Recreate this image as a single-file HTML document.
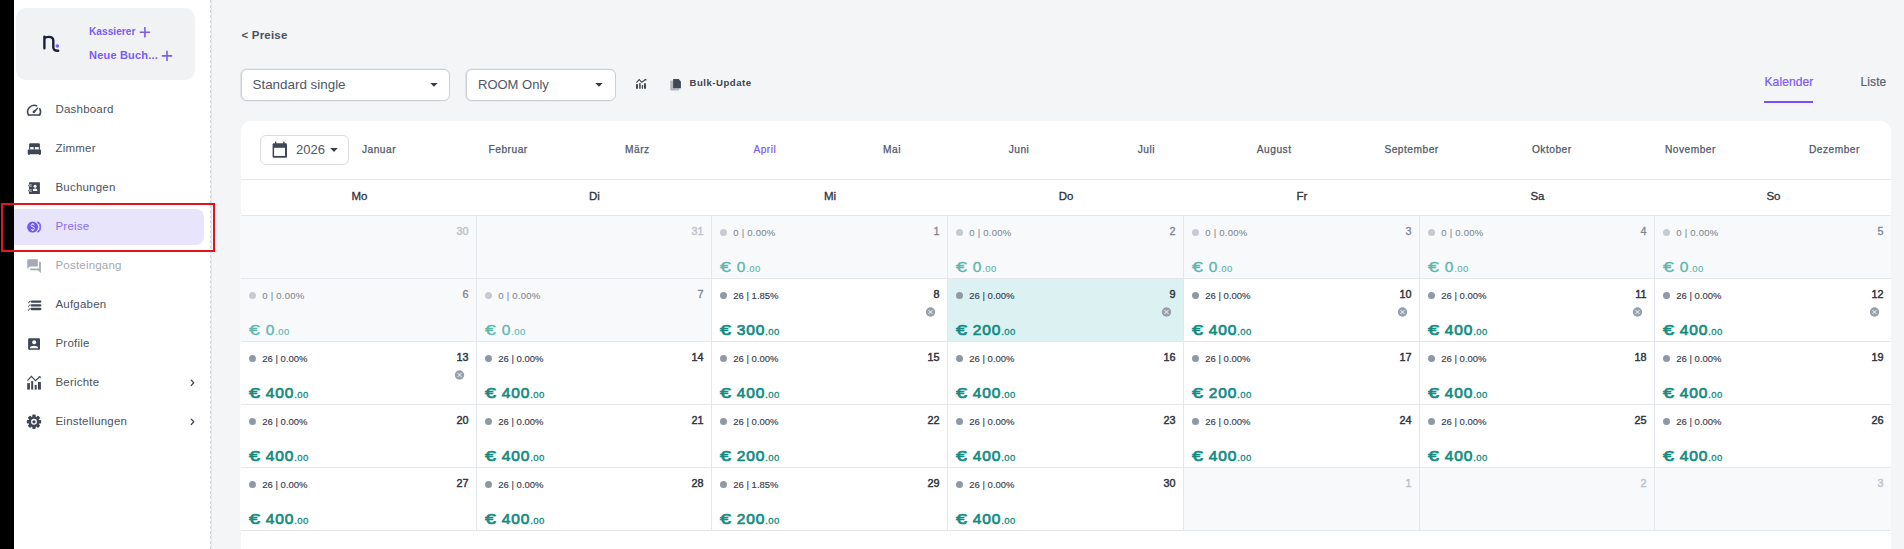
<!DOCTYPE html>
<html><head><meta charset="utf-8"><title>Preise</title><style>
*{box-sizing:border-box;margin:0;padding:0}
html,body{width:1904px;height:549px;overflow:hidden}
body{position:relative;background:#f4f5f7;font-family:"Liberation Sans",sans-serif;color:#4b5262}
.abs{position:absolute}
#blk{position:absolute;left:0;top:0;width:14px;height:549px;background:#000}
#side{position:absolute;left:14px;top:0;width:197px;height:549px;background:#fff;border-right:1px dashed #d3d7dc}
#brand{position:absolute;left:16px;top:8px;width:179px;height:72px;background:#f1f2f4;border-radius:10px}
.qa{position:absolute;left:89px;font-size:11px;font-weight:bold;color:#7c5cf5;white-space:nowrap;line-height:1}
.plus{position:absolute;width:10.6px;height:10.6px}
.plus:before{content:"";position:absolute;left:0;top:4.6px;width:10.6px;height:1.4px;background:#7c5cf5}
.plus:after{content:"";position:absolute;top:0;left:4.6px;height:10.6px;width:1.4px;background:#7c5cf5}
.nav{position:absolute;left:55.5px;font-size:11.5px;letter-spacing:0.2px;color:#4b5262;white-space:nowrap;line-height:1}
.nav.dis{color:#a4a9b1}
.nav.act{color:#8a6ef3}
.ic{position:absolute;left:26px;width:16px;height:16px}
#hl{position:absolute;left:14px;top:209px;width:190px;height:36px;background:#e8e4fb;border-radius:0 8px 8px 0}
#red{position:absolute;left:1px;top:203px;width:214px;height:49px;border:2px solid #e3141b}
.chev{position:absolute;left:189px;width:6px;height:6px;border-right:1.3px solid #4b5262;border-bottom:1.3px solid #4b5262;transform:rotate(-45deg)}
#back{position:absolute;left:241.5px;top:30px;font-size:11.5px;letter-spacing:0.2px;font-weight:bold;color:#4a5161;line-height:1}
.sel{position:absolute;top:69px;height:32px;background:#fff;border:1px solid #cdd1d7;border-radius:6px;box-shadow:-0.6px 0 0 0.4px #dfe2e6}
.sel .t{position:absolute;left:10.5px;top:8.2px;font-size:13.4px;color:#505766;line-height:1;white-space:nowrap}
.caret{position:absolute;width:0;height:0;border-left:3.8px solid transparent;border-right:3.8px solid transparent;border-top:4px solid #3f4653}
#bulk{position:absolute;left:689.5px;top:78.3px;font-size:9.6px;letter-spacing:0.5px;font-weight:bold;color:#3f4653;line-height:1;white-space:nowrap}
.tab{position:absolute;top:75.8px;font-size:12px;letter-spacing:0.1px;-webkit-text-stroke:0.2px currentColor;line-height:1;white-space:nowrap}
#card{position:absolute;left:241px;top:121px;width:1650px;height:440px;background:#fff;border-radius:10px}
#year{position:absolute;left:260px;top:135px;width:89px;height:30px;border:1px solid #d9dde3;border-radius:6px;background:#fff}
.mon{position:absolute;top:145px;width:120px;text-align:center;font-size:10.2px;letter-spacing:0.5px;text-indent:0.5px;color:#515867;-webkit-text-stroke:0.25px #515867;line-height:1;white-space:nowrap}
.mon.act{color:#7e57f5;-webkit-text-stroke:0.2px #7e57f5}
.dh{position:absolute;top:190.6px;width:80px;text-align:center;font-size:11.5px;font-weight:normal;color:#2c323d;line-height:1;-webkit-text-stroke:0.3px #2c323d}
.hl{position:absolute;left:241px;width:1650px;height:1px;background:#e4e7eb}
.vl{position:absolute;top:215px;width:1px;height:315px;background:#e4e7eb}
.cell{position:absolute}
.dn{position:absolute;right:7.6px;top:11.3px;font-size:10.8px;font-weight:normal;color:#2f3541;line-height:1;-webkit-text-stroke:0.45px currentColor}
.dnp{color:#bfc3c9}
.dnl{color:#7d8490;-webkit-text-stroke:0.3px currentColor}
.dot{position:absolute;left:9px;top:14.1px;width:7px;height:7px;border-radius:50%;background:#8f99a5}
.dot.l{background:#c6cbd2}
.st{position:absolute;left:22.3px;top:12.7px;font-size:9.5px;letter-spacing:0;color:#3a4050;line-height:1;white-space:nowrap;-webkit-text-stroke:0.15px #3a4050}
.st.l{color:#868c95;-webkit-text-stroke:0.12px #868c95;letter-spacing:0.25px}
.pr{position:absolute;left:9.2px;top:43.8px;font-size:15.5px;letter-spacing:0.85px;font-weight:normal;-webkit-text-stroke:0.7px #138c82;color:#138c82;line-height:1;white-space:nowrap}
.pr b{font-weight:normal;display:inline-block;width:16.6px;letter-spacing:0;transform:scaleX(1.28);transform-origin:0 0}
.pr.l{color:#5db7ad;font-weight:normal;-webkit-text-stroke:0.35px #5db7ad}
.pr.l b{font-weight:normal}
.pr.l span{-webkit-text-stroke:0.15px #5db7ad}
.pr span{font-size:9.5px;font-weight:normal;letter-spacing:0.45px;-webkit-text-stroke:0.3px #138c82}
.xi{position:absolute;right:11px;top:29px;width:11px;height:11px}
.xi svg{display:block}

</style></head><body>
<div id="blk"></div>
<div id="side"></div><div class="abs" style="left:211px;top:0;width:1px;height:549px;background:#e6e8eb"></div>
<div id="brand"></div>
<svg class="abs" style="left:0;top:0" width="80" height="80" viewBox="0 0 80 80"><path d="M44.4 48.3V36.6M44.4 38.2C45.6 37.1 47.1 36.9 48.8 36.9C51.5 36.9 53.3 38.3 53.3 40.8V47.3C53.3 49.8 55 51 58.2 50.7" fill="none" stroke="#1b1f3b" stroke-width="2.4" stroke-linecap="round"/><circle cx="57.3" cy="46" r="1.8" fill="#7b5cfa"/></svg>
<div class="qa" style="top:27.3px;font-size:10.2px">Kassierer</div><svg class="abs" style="left:130px;top:20px" width="50" height="50" viewBox="130 20 50 50"><path d="M139.7 32.2H150.1M144.9 27V37.4" stroke="#7c5cf5" stroke-width="1.6"/><path d="M161.8 55.9H172.2M167 50.7V61.1" stroke="#7c5cf5" stroke-width="1.6"/></svg>
<div class="qa" style="top:50px;letter-spacing:0.2px">Neue Buch...</div>

<div id="hl"></div>
<div class="nav" style="top:104px">Dashboard</div>
<div class="nav" style="top:143px">Zimmer</div>
<div class="nav" style="top:182px">Buchungen</div>
<div class="nav act" style="top:221px">Preise</div>
<div class="nav dis" style="top:260px">Posteingang</div>
<div class="nav" style="top:299px">Aufgaben</div>
<div class="nav" style="top:338px">Profile</div>
<div class="nav" style="top:377px">Berichte</div>
<div class="nav" style="top:416px">Einstellungen</div>
<svg class="abs" style="left:180px;top:372px" width="24" height="24" viewBox="0 0 24 24"><path d="M11.3 8.1L13.7 10.8L11.2 13.6" fill="none" stroke="#3f4756" stroke-width="1.3" stroke-linecap="round" stroke-linejoin="round"/></svg>
<svg class="abs" style="left:180px;top:411px" width="24" height="24" viewBox="0 0 24 24"><path d="M11.3 8.1L13.7 10.8L11.2 13.6" fill="none" stroke="#3f4756" stroke-width="1.3" stroke-linecap="round" stroke-linejoin="round"/></svg>
<svg class="abs" style="left:22px;top:100px" width="24" height="24" viewBox="0 0 24 24" fill="none" stroke="#3f4756" stroke-width="1.6" stroke-linecap="round"><path d="M6.4 15A6.6 6.6 0 0 1 14.6 5.8"/><path d="M17.9 8.8A6.6 6.6 0 0 1 17.6 15"/><path d="M6.6 15H17.5"/><path d="M12.65 12.85L10.95 11.15L15.92 7.32L16.48 7.88Z" fill="#3f4756" stroke="none"/><circle cx="11.8" cy="12" r="1.2" fill="#3f4756" stroke="none"/></svg>
<svg class="abs" style="left:22px;top:139px" width="24" height="24" viewBox="0 0 24 24"><path fill="#3f4756" d="M8.4 4.2H16.6A1.3 1.3 0 0 1 17.9 5.5V10.7H7.1V5.5A1.3 1.3 0 0 1 8.4 4.2Z"/><rect x="8.2" y="8.1" width="3.5" height="2.6" fill="#fff"/><rect x="12.9" y="8.1" width="3.9" height="2.6" fill="#fff"/><rect x="5.7" y="10.6" width="13.3" height="4.6" rx="0.8" fill="#3f4756"/><rect x="6.2" y="14.6" width="1.6" height="1.2" fill="#3f4756"/><rect x="17" y="14.6" width="1.6" height="1.2" fill="#3f4756"/></svg>
<svg class="abs" style="left:22px;top:178px" width="24" height="24" viewBox="0 0 24 24"><rect x="7" y="4.2" width="10.9" height="11.8" rx="0.6" fill="#3f4756"/><rect x="6.8" y="6.3" width="2.6" height="2.6" fill="#fff"/><rect x="6.8" y="11.3" width="2.6" height="2.6" fill="#fff"/><rect x="6.5" y="6.9" width="2.3" height="1.4" rx="0.7" fill="none" stroke="#3f4756" stroke-width="0.9"/><rect x="6.5" y="11.9" width="2.3" height="1.4" rx="0.7" fill="none" stroke="#3f4756" stroke-width="0.9"/><circle cx="13.1" cy="8.2" r="1.5" fill="#fff"/><path d="M11 13.1V12A1.6 1.6 0 0 1 12.6 10.4H13.7A1.6 1.6 0 0 1 15.3 12V13.1Z" fill="#fff"/></svg>
<svg class="abs" style="left:22px;top:217px" width="24" height="24" viewBox="0 0 24 24"><path d="M15.4 5A5.8 5.8 0 0 1 15.4 15.2" fill="none" stroke="#7159f0" stroke-width="1.5"/><path d="M17.1 6.6A5.6 5.6 0 0 1 17.1 13.6" fill="none" stroke="#8f7cf3" stroke-width="1"/><circle cx="10.6" cy="10.1" r="5.9" fill="#7159f0" stroke="#e8e4fb" stroke-width="0.8"/><path d="M12.4 8C12 7.4 11.4 7.2 10.7 7.2C9.8 7.2 9.1 7.7 9.1 8.5C9.1 10.2 12.4 9.5 12.4 11.5C12.4 12.4 11.6 13 10.7 13C9.9 13 9.2 12.7 8.9 12.1M10.7 6.3V7.2M10.7 13V14" fill="none" stroke="#fff" stroke-width="1"/></svg>
<svg class="abs" style="left:22px;top:256px" width="24" height="24" viewBox="0 0 24 24" fill="#a6abb3"><path d="M18.8 6.1H17.1V12.6H8.3V14.2H16L18.9 17V6.1Z"/><path d="M15.8 3.3H5.9A0.6 0.6 0 0 0 5.3 3.9V13.1L7.9 10.6H15.2A0.6 0.6 0 0 0 15.8 10V3.3Z"/></svg>
<svg class="abs" style="left:22px;top:295px" width="24" height="24" viewBox="0 0 24 24"><path d="M9.6 6.6H18.3M9.6 10.3H18.3M9.6 14H18.3" stroke="#3f4756" stroke-width="2.3" stroke-linecap="round"/><path d="M5.9 7.4L6.6 8L7.9 5.9M5.9 11.1L6.6 11.7L7.9 9.6M5.9 14.8L6.6 15.4L7.9 13.3" fill="none" stroke="#3f4756" stroke-width="0.9"/></svg>
<svg class="abs" style="left:22px;top:334px" width="24" height="24" viewBox="0 0 24 24"><rect x="6.1" y="4.2" width="11.9" height="11.6" rx="1.1" fill="#3f4756"/><circle cx="12.2" cy="8.3" r="2" fill="#fff"/><path d="M8 14.3V13.5C8 12.4 10.3 11.7 12 11.7C13.7 11.7 16 12.4 16 13.5V14.3Z" fill="#fff"/></svg>
<svg class="abs" style="left:22px;top:373px" width="24" height="24" viewBox="0 0 24 24"><rect x="5.2" y="10.1" width="2.7" height="6.5" fill="#3f4756"/><rect x="9.2" y="8.1" width="2" height="8.5" fill="#3f4756"/><rect x="12.7" y="11.9" width="2" height="4.7" fill="#3f4756"/><rect x="16" y="9" width="2.9" height="7.6" fill="#3f4756"/><path d="M5.4 7.6L9.4 3.4L13.5 7.7L17.6 4" fill="none" stroke="#3f4756" stroke-width="1.2"/><path d="M16.2 3.2H18.7V5.7Z" fill="#3f4756"/></svg>
<svg class="abs" style="left:22px;top:412px" width="24" height="24" viewBox="0 0 24 24"><g fill="#3f4756" transform="translate(12 9.8)"><rect x="-1.7" y="-7.2" width="3.4" height="14.4" rx="0.8"/><rect x="-1.7" y="-7.2" width="3.4" height="14.4" rx="0.8" transform="rotate(45)"/><rect x="-1.7" y="-7.2" width="3.4" height="14.4" rx="0.8" transform="rotate(90)"/><rect x="-1.7" y="-7.2" width="3.4" height="14.4" rx="0.8" transform="rotate(135)"/><circle r="5.3"/></g><circle cx="12" cy="9.8" r="2.3" fill="none" stroke="#fff" stroke-width="1.3"/></svg>

<div id="red"></div>

<div id="back">&lt; Preise</div>
<div class="sel" style="left:241px;width:209px"><div class="t">Standard single</div></div>
<div class="sel" style="left:466px;width:150px"><div class="t" style="font-size:13px;top:8.4px;left:11px">ROOM Only</div></div>
<svg class="abs" style="left:0;top:0" width="700" height="200" viewBox="0 0 700 200"><path d="M430.3 82.9H437.6L434 86.7Z" fill="#333a48"/><path d="M595.3 82.9H602.6L599 86.7Z" fill="#333a48"/><g fill="#3f4855"><rect x="636" y="84" width="2" height="4.8" rx="0.6"/><rect x="639" y="83" width="1.8" height="5.8" rx="0.6" fill="#5a626e"/><rect x="641.8" y="85" width="1.3" height="3.8" rx="0.5"/><rect x="644" y="83.2" width="2" height="5.6" rx="0.6"/></g>
<path d="M636.4 82.6L639.2 79.6L641.8 82.3L645.8 79.3" fill="none" stroke="#3f4855" stroke-width="1.1"/><path d="M644.2 78.9H646.4V81.1Z" fill="#3f4855"/>
<path d="M670.2 81.5A1 1 0 0 1 671.2 80.5H673V88.2H679.3V89.5A1 1 0 0 1 678.3 90.5H671.2A1 1 0 0 1 670.2 89.5Z" fill="#b3b8bf"/>
<path d="M673.1 79H678.6L680.9 81.4V88.2H673.1Z" fill="#3f4855"/></svg>
<div id="bulk">Bulk-Update</div>
<div class="tab" style="left:1764.5px;color:#7e57f5">Kalender</div>
<div class="abs" style="left:1764px;top:101px;width:49px;height:2px;background:#7b4dff"></div>
<div class="tab" style="left:1860.5px;color:#566070">Liste</div>

<div id="card"></div>
<div id="year"></div>
<svg class="abs" style="left:268px;top:138px" width="24" height="24" viewBox="0 0 24 24"><rect x="4.6" y="5.2" width="14.4" height="14.5" rx="1.3" fill="#3f4855"/><rect x="6.1" y="9.8" width="10.9" height="8.1" fill="#fff"/><rect x="7" y="3.4" width="1.4" height="2.6" rx="0.6" fill="#3f4855"/><rect x="15.2" y="3.4" width="1.4" height="2.6" rx="0.6" fill="#3f4855"/></svg><svg class="abs" style="left:320px;top:140px" width="24" height="20" viewBox="320 140 24 20"><path d="M330.2 148H337.8L334 151.9Z" fill="#3a414e"/></svg>
<div class="abs" style="left:296px;top:143.3px;font-size:13px;color:#505766;line-height:1">2026</div>

<div class="mon" style="left:318.75px">Januar</div>
<div class="mon" style="left:447.9px">Februar</div>
<div class="mon" style="left:577.1px">März</div>
<div class="mon act" style="left:704.6px">April</div>
<div class="mon" style="left:831.75px">Mai</div>
<div class="mon" style="left:958.8px">Juni</div>
<div class="mon" style="left:1086.1px">Juli</div>
<div class="mon" style="left:1213.9px">August</div>
<div class="mon" style="left:1351.3px">September</div>
<div class="mon" style="left:1491.5px">Oktober</div>
<div class="mon" style="left:1630.2px">November</div>
<div class="mon" style="left:1774.2px">Dezember</div>
<div class="dh" style="left:319.5px">Mo</div>
<div class="dh" style="left:554.5px">Di</div>
<div class="dh" style="left:790px">Mi</div>
<div class="dh" style="left:1026px">Do</div>
<div class="dh" style="left:1262px">Fr</div>
<div class="dh" style="left:1497.5px">Sa</div>
<div class="dh" style="left:1733.5px">So</div>
<div class="cell" style="left:240px;top:215px;width:236px;height:63px;background:#f8f9fb"><div class="dn dnp">30</div></div>
<div class="cell" style="left:476px;top:215px;width:235px;height:63px;background:#f8f9fb"><div class="dn dnp">31</div></div>
<div class="cell" style="left:711px;top:215px;width:236px;height:63px;background:#f8f9fb"><div class="dn dnl">1</div><div class="dot l"></div><div class="st l">0 | 0.00%</div><div class="pr l"><b>€</b>0<span>.00</span></div></div>
<div class="cell" style="left:947px;top:215px;width:236px;height:63px;background:#f8f9fb"><div class="dn dnl">2</div><div class="dot l"></div><div class="st l">0 | 0.00%</div><div class="pr l"><b>€</b>0<span>.00</span></div></div>
<div class="cell" style="left:1183px;top:215px;width:236px;height:63px;background:#f8f9fb"><div class="dn dnl">3</div><div class="dot l"></div><div class="st l">0 | 0.00%</div><div class="pr l"><b>€</b>0<span>.00</span></div></div>
<div class="cell" style="left:1419px;top:215px;width:235px;height:63px;background:#f8f9fb"><div class="dn dnl">4</div><div class="dot l"></div><div class="st l">0 | 0.00%</div><div class="pr l"><b>€</b>0<span>.00</span></div></div>
<div class="cell" style="left:1654px;top:215px;width:237px;height:63px;background:#f8f9fb"><div class="dn dnl">5</div><div class="dot l"></div><div class="st l">0 | 0.00%</div><div class="pr l"><b>€</b>0<span>.00</span></div></div>
<div class="cell" style="left:240px;top:278px;width:236px;height:63px;background:#f8f9fb"><div class="dn dnl">6</div><div class="dot l"></div><div class="st l">0 | 0.00%</div><div class="pr l"><b>€</b>0<span>.00</span></div></div>
<div class="cell" style="left:476px;top:278px;width:235px;height:63px;background:#f8f9fb"><div class="dn dnl">7</div><div class="dot l"></div><div class="st l">0 | 0.00%</div><div class="pr l"><b>€</b>0<span>.00</span></div></div>
<div class="cell" style="left:711px;top:278px;width:236px;height:63px;background:#ffffff"><div class="dn ">8</div><div class="dot "></div><div class="st ">26 | 1.85%</div><div class="pr "><b>€</b>300<span>.00</span></div><div class="xi"><svg width="11" height="11" viewBox="0 0 11 11"><circle cx="5.5" cy="5" r="4.7" fill="#97a1ad"/><path d="M3.8 3.3L7.2 6.7M7.2 3.3L3.8 6.7" stroke="#fff" stroke-width="0.95" stroke-linecap="round"/></svg></div></div>
<div class="cell" style="left:947px;top:278px;width:236px;height:63px;background:#dcf1f2"><div class="dn ">9</div><div class="dot "></div><div class="st ">26 | 0.00%</div><div class="pr "><b>€</b>200<span>.00</span></div><div class="xi"><svg width="11" height="11" viewBox="0 0 11 11"><circle cx="5.5" cy="5" r="4.7" fill="#97a1ad"/><path d="M3.8 3.3L7.2 6.7M7.2 3.3L3.8 6.7" stroke="#fff" stroke-width="0.95" stroke-linecap="round"/></svg></div></div>
<div class="cell" style="left:1183px;top:278px;width:236px;height:63px;background:#ffffff"><div class="dn ">10</div><div class="dot "></div><div class="st ">26 | 0.00%</div><div class="pr "><b>€</b>400<span>.00</span></div><div class="xi"><svg width="11" height="11" viewBox="0 0 11 11"><circle cx="5.5" cy="5" r="4.7" fill="#97a1ad"/><path d="M3.8 3.3L7.2 6.7M7.2 3.3L3.8 6.7" stroke="#fff" stroke-width="0.95" stroke-linecap="round"/></svg></div></div>
<div class="cell" style="left:1419px;top:278px;width:235px;height:63px;background:#ffffff"><div class="dn ">11</div><div class="dot "></div><div class="st ">26 | 0.00%</div><div class="pr "><b>€</b>400<span>.00</span></div><div class="xi"><svg width="11" height="11" viewBox="0 0 11 11"><circle cx="5.5" cy="5" r="4.7" fill="#97a1ad"/><path d="M3.8 3.3L7.2 6.7M7.2 3.3L3.8 6.7" stroke="#fff" stroke-width="0.95" stroke-linecap="round"/></svg></div></div>
<div class="cell" style="left:1654px;top:278px;width:237px;height:63px;background:#ffffff"><div class="dn ">12</div><div class="dot "></div><div class="st ">26 | 0.00%</div><div class="pr "><b>€</b>400<span>.00</span></div><div class="xi"><svg width="11" height="11" viewBox="0 0 11 11"><circle cx="5.5" cy="5" r="4.7" fill="#97a1ad"/><path d="M3.8 3.3L7.2 6.7M7.2 3.3L3.8 6.7" stroke="#fff" stroke-width="0.95" stroke-linecap="round"/></svg></div></div>
<div class="cell" style="left:240px;top:341px;width:236px;height:63px;background:#ffffff"><div class="dn ">13</div><div class="dot "></div><div class="st ">26 | 0.00%</div><div class="pr "><b>€</b>400<span>.00</span></div><div class="xi"><svg width="11" height="11" viewBox="0 0 11 11"><circle cx="5.5" cy="5" r="4.7" fill="#97a1ad"/><path d="M3.8 3.3L7.2 6.7M7.2 3.3L3.8 6.7" stroke="#fff" stroke-width="0.95" stroke-linecap="round"/></svg></div></div>
<div class="cell" style="left:476px;top:341px;width:235px;height:63px;background:#ffffff"><div class="dn ">14</div><div class="dot "></div><div class="st ">26 | 0.00%</div><div class="pr "><b>€</b>400<span>.00</span></div></div>
<div class="cell" style="left:711px;top:341px;width:236px;height:63px;background:#ffffff"><div class="dn ">15</div><div class="dot "></div><div class="st ">26 | 0.00%</div><div class="pr "><b>€</b>400<span>.00</span></div></div>
<div class="cell" style="left:947px;top:341px;width:236px;height:63px;background:#ffffff"><div class="dn ">16</div><div class="dot "></div><div class="st ">26 | 0.00%</div><div class="pr "><b>€</b>400<span>.00</span></div></div>
<div class="cell" style="left:1183px;top:341px;width:236px;height:63px;background:#ffffff"><div class="dn ">17</div><div class="dot "></div><div class="st ">26 | 0.00%</div><div class="pr "><b>€</b>200<span>.00</span></div></div>
<div class="cell" style="left:1419px;top:341px;width:235px;height:63px;background:#ffffff"><div class="dn ">18</div><div class="dot "></div><div class="st ">26 | 0.00%</div><div class="pr "><b>€</b>400<span>.00</span></div></div>
<div class="cell" style="left:1654px;top:341px;width:237px;height:63px;background:#ffffff"><div class="dn ">19</div><div class="dot "></div><div class="st ">26 | 0.00%</div><div class="pr "><b>€</b>400<span>.00</span></div></div>
<div class="cell" style="left:240px;top:404px;width:236px;height:63px;background:#ffffff"><div class="dn ">20</div><div class="dot "></div><div class="st ">26 | 0.00%</div><div class="pr "><b>€</b>400<span>.00</span></div></div>
<div class="cell" style="left:476px;top:404px;width:235px;height:63px;background:#ffffff"><div class="dn ">21</div><div class="dot "></div><div class="st ">26 | 0.00%</div><div class="pr "><b>€</b>400<span>.00</span></div></div>
<div class="cell" style="left:711px;top:404px;width:236px;height:63px;background:#ffffff"><div class="dn ">22</div><div class="dot "></div><div class="st ">26 | 0.00%</div><div class="pr "><b>€</b>200<span>.00</span></div></div>
<div class="cell" style="left:947px;top:404px;width:236px;height:63px;background:#ffffff"><div class="dn ">23</div><div class="dot "></div><div class="st ">26 | 0.00%</div><div class="pr "><b>€</b>400<span>.00</span></div></div>
<div class="cell" style="left:1183px;top:404px;width:236px;height:63px;background:#ffffff"><div class="dn ">24</div><div class="dot "></div><div class="st ">26 | 0.00%</div><div class="pr "><b>€</b>400<span>.00</span></div></div>
<div class="cell" style="left:1419px;top:404px;width:235px;height:63px;background:#ffffff"><div class="dn ">25</div><div class="dot "></div><div class="st ">26 | 0.00%</div><div class="pr "><b>€</b>400<span>.00</span></div></div>
<div class="cell" style="left:1654px;top:404px;width:237px;height:63px;background:#ffffff"><div class="dn ">26</div><div class="dot "></div><div class="st ">26 | 0.00%</div><div class="pr "><b>€</b>400<span>.00</span></div></div>
<div class="cell" style="left:240px;top:467px;width:236px;height:63px;background:#ffffff"><div class="dn ">27</div><div class="dot "></div><div class="st ">26 | 0.00%</div><div class="pr "><b>€</b>400<span>.00</span></div></div>
<div class="cell" style="left:476px;top:467px;width:235px;height:63px;background:#ffffff"><div class="dn ">28</div><div class="dot "></div><div class="st ">26 | 0.00%</div><div class="pr "><b>€</b>400<span>.00</span></div></div>
<div class="cell" style="left:711px;top:467px;width:236px;height:63px;background:#ffffff"><div class="dn ">29</div><div class="dot "></div><div class="st ">26 | 1.85%</div><div class="pr "><b>€</b>200<span>.00</span></div></div>
<div class="cell" style="left:947px;top:467px;width:236px;height:63px;background:#ffffff"><div class="dn ">30</div><div class="dot "></div><div class="st ">26 | 0.00%</div><div class="pr "><b>€</b>400<span>.00</span></div></div>
<div class="cell" style="left:1183px;top:467px;width:236px;height:63px;background:#f8f9fb"><div class="dn dnp">1</div></div>
<div class="cell" style="left:1419px;top:467px;width:235px;height:63px;background:#f8f9fb"><div class="dn dnp">2</div></div>
<div class="cell" style="left:1654px;top:467px;width:237px;height:63px;background:#f8f9fb"><div class="dn dnp">3</div></div>
<div class="hl" style="top:179px"></div>
<div class="hl" style="top:215px"></div>
<div class="hl" style="top:278px"></div>
<div class="hl" style="top:341px"></div>
<div class="hl" style="top:404px"></div>
<div class="hl" style="top:467px"></div>
<div class="hl" style="top:530px"></div>
<div class="vl" style="left:476px"></div>
<div class="vl" style="left:711px"></div>
<div class="vl" style="left:947px"></div>
<div class="vl" style="left:1183px"></div>
<div class="vl" style="left:1419px"></div>
<div class="vl" style="left:1654px"></div>

</body></html>
